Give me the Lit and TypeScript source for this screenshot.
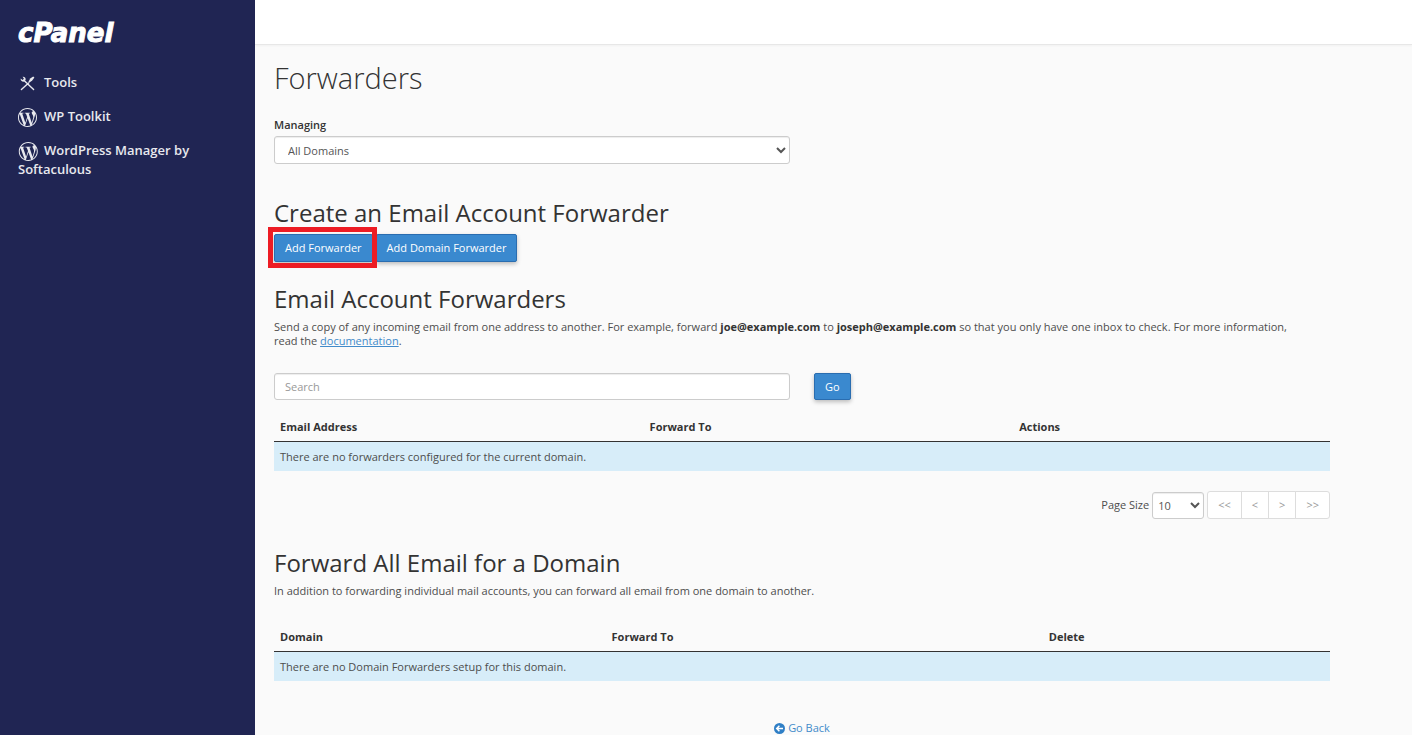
import { LitElement, html, css, svg } from "lit";
import { customElement, property } from "lit/decorators.js";

const wordpressMark = svg`<path d="M21.469 6.825c.84 1.537 1.318 3.3 1.318 5.175 0 3.979-2.156 7.456-5.363 9.325l3.295-9.527c.615-1.54.82-2.771.82-3.864 0-.405-.026-.78-.07-1.11m-7.981.105c.647-.03 1.232-.105 1.232-.105.582-.075.514-.93-.067-.899 0 0-1.755.135-2.88.135-1.064 0-2.85-.15-2.85-.15-.585-.03-.661.855-.075.885 0 0 .54.061 1.125.09l1.68 4.605-2.37 7.08L5.354 6.9c.649-.03 1.234-.1 1.234-.1.585-.075.516-.93-.065-.896 0 0-1.746.138-2.874.138-.2 0-.438-.008-.69-.015C4.911 3.15 8.235 1.215 12 1.215c2.809 0 5.365 1.072 7.286 2.833-.046-.003-.091-.009-.141-.009-1.06 0-1.812.923-1.812 1.914 0 .89.513 1.643 1.06 2.531.411.72.89 1.643.89 2.977 0 .915-.354 1.994-.821 3.479l-1.075 3.585-3.9-11.61.001.014zM12 22.784c-1.059 0-2.081-.153-3.048-.437l3.237-9.406 3.315 9.087c.024.053.05.101.078.149-1.12.393-2.325.609-3.582.609M1.211 12c0-1.564.336-3.05.935-4.39L7.29 21.709C3.694 19.96 1.212 16.271 1.211 12M12 0C5.385 0 0 5.385 0 12s5.385 12 12 12 12-5.385 12-12S18.615 0 12 0"/>`;

@customElement("side-nav")
export class SideNav extends LitElement {
  static styles = css`
    :host {
      display: block;
      background: #202553;
      padding: 17px 18px;
      box-sizing: border-box;
    }
    .logo {
      display: block;
      font: italic bold 26px/32px "DejaVu Sans", sans-serif;
      color: #fff;
      -webkit-text-stroke: 1px #fff;
      text-decoration: none;
      margin-bottom: 24px;
    }
    .list {
      list-style: none;
      margin: 0;
      padding: 0;
      display: grid;
      gap: 15px;
    }
    .item {
      display: block;
      color: #e8e9ee;
      font-size: 13px;
      font-weight: 600;
      line-height: 19px;
      text-decoration: none;
    }
    .icon {
      width: 19px;
      height: 19px;
      margin: -2px 7px -2px 0;
      vertical-align: middle;
      fill: currentColor;
    }
  `;

  render() {
    return html`
      <a class="logo" href="#">cPanel</a>
      <nav>
        <ul class="list">
          <li>
            <a class="item" href="#tools"
              ><svg class="icon" viewBox="0 0 19 19" aria-hidden="true">
                <path
                  d="M6.6 7 15.6 15.6M10.6 8.9 3.4 15.6"
                  fill="none"
                  stroke="currentColor"
                  stroke-width="1.4"
                  stroke-linecap="round"
                />
                <path
                  d="M10.4 8.1 12.2 4.6 15.2 2.4 16.4 3.6 14.2 6.6 11.2 8.8z"
                />
                <path
                  d="M4.6 2.7A2.7 2.7 0 0 1 7.6 6.1L6.2 7.5A2.7 2.7 0 0 1 2.7 4.4L4.6 6 5.9 4.8z"
                /></svg
              >Tools</a
            >
          </li>
          <li>
            <a class="item" href="#wp-toolkit"
              ><svg class="icon" viewBox="0 0 24 24" aria-hidden="true">
                ${wordpressMark}</svg
              >WP Toolkit</a
            >
          </li>
          <li>
            <a class="item" href="#wordpress-manager"
              ><svg class="icon" viewBox="-1 0 24 24" overflow="visible" aria-hidden="true">
                ${wordpressMark}</svg
              >WordPress Manager by Softaculous</a
            >
          </li>
        </ul>
      </nav>
    `;
  }
}

@customElement("empty-table")
export class EmptyTable extends LitElement {
  static styles = css`
    :host {
      display: block;
    }
    .table {
      width: 100%;
      border-collapse: collapse;
      table-layout: fixed;
    }
    .head {
      padding: 7px 6px;
      line-height: 15px;
      text-align: left;
      font-weight: 700;
      color: #333;
      border-bottom: 1px solid #333;
    }
    .cell {
      padding: 7px 6px;
      line-height: 15px;
      background: #d7edf9;
    }
  `;

  @property({ attribute: false }) columns: { label: string; width: string }[] = [];
  @property() message = "";

  render() {
    return html`
      <table class="table">
        <colgroup>
          ${this.columns.map((c) => html`<col style="width:${c.width}" />`)}
        </colgroup>
        <thead>
          <tr>
            ${this.columns.map((c) => html`<th class="head" scope="col">${c.label}</th>`)}
          </tr>
        </thead>
        <tbody>
          <tr>
            <td class="cell" colspan=${this.columns.length}>${this.message}</td>
          </tr>
        </tbody>
      </table>
    `;
  }
}

@customElement("app-root")
export class AppRoot extends LitElement {
  static styles = css`
    :host {
      display: grid;
      grid-template-columns: 255px minmax(0, 1fr);
      min-height: 100vh;
      background: #fafafa;
      color: #4d4d4d;
      font-family: "Open Sans", "Noto Sans", sans-serif;
      font-size: 11px;
      line-height: 14px;
    }
    .topbar {
      height: 44px;
      background: #fff;
      border-bottom: 1px solid #e7e7e7;
      box-shadow: 0 1px 2px rgba(0, 0, 0, 0.04);
    }
    .content {
      max-width: 1056px;
      margin: 0 19px;
    }
    h1,
    h2,
    p {
      margin: 0;
    }
    .title {
      font-size: 29px;
      line-height: 40px;
      font-weight: 300;
      color: #333;
      padding: 13px 0 20px;
    }
    .heading {
      font-size: 24px;
      line-height: 32px;
      font-weight: 400;
      color: #333;
    }
    .row {
      display: grid;
      grid-template-columns: 1fr 1fr;
      gap: 24px;
      justify-items: start;
    }
    .filter {
      margin-top: 25px;
    }
    .managing {
      width: 100%;
    }
    .label {
      display: block;
      font-weight: 600;
      color: #333;
      margin-bottom: 4px;
    }
    .field {
      box-sizing: border-box;
      height: 28px;
      border: 1px solid #ccc;
      border-radius: 3px;
      background-color: #fff;
      box-shadow: inset 0 1px 1px rgba(0, 0, 0, 0.075);
      color: #555;
      font: inherit;
      margin: 0;
    }
    .wide {
      width: 100%;
      padding: 0 0 0 9px;
    }
    .search {
      width: 100%;
      height: 27px;
      padding: 0 10px;
    }
    .search::placeholder {
      color: #999;
      opacity: 1;
    }
    .create {
      margin: 33px 0 21px;
    }
    .actions {
      display: flex;
      gap: 3px;
      margin-top: 5px;
    }
    .marked {
      position: relative;
      display: flex;
    }
    .marked::after {
      content: "";
      position: absolute;
      inset: -7px -4px -6px -6px;
      border: 5px solid #ed1c24;
      pointer-events: none;
    }
    .button {
      box-sizing: border-box;
      height: 28px;
      padding: 0 10px;
      border: 1px solid #2a6db0;
      border-radius: 2px;
      background: #3a89cf;
      color: #fff;
      font: inherit;
      font-weight: 500;
      box-shadow: 0 2px 4px rgba(0, 0, 0, 0.25);
    }
    .go {
      height: 27px;
    }
    .intro {
      margin-top: 5px;
      padding-right: 24px;
    }
    .strong {
      color: #333;
      font-weight: 700;
    }
    .link {
      color: #428bca;
    }
    .table {
      margin-top: 12px;
    }
    .domains {
      margin-top: 24px;
    }
    .pager {
      display: flex;
      justify-content: flex-end;
      align-items: center;
      gap: 3px;
      margin: 20px 0 28px;
    }
    .size {
      width: 52px;
      padding: 0 0 0 1px;
      height: 27px;
    }
    .pages {
      display: flex;
    }
    .page {
      box-sizing: border-box;
      height: 28px;
      padding: 0 10px;
      border: 1px solid #ddd;
      margin-left: -1px;
      background: #fff;
      color: #999;
      font: inherit;
    }
    .page:first-child {
      border-radius: 3px 0 0 3px;
      margin-left: 0;
    }
    .page:last-child {
      border-radius: 0 3px 3px 0;
    }
    .back {
      display: flex;
      justify-content: center;
      align-items: center;
      gap: 3px;
      width: max-content;
      margin: 40px auto 0;
      color: #428bca;
      text-decoration: none;
    }
    .back-icon {
      width: 11px;
      height: 11px;
    }
  `;

  render() {
    return html`
      <side-nav></side-nav>
      <div>
        <header class="topbar"></header>
        <main class="content">
          <h1 class="title">Forwarders</h1>

          <div class="row">
            <div class="managing">
              <label class="label" for="domain">Managing</label>
              <select id="domain" class="field wide">
                <option>All Domains</option>
              </select>
            </div>
          </div>

          <section class="create">
            <h2 class="heading">Create an Email Account Forwarder</h2>
            <div class="actions">
              <span class="marked"><button class="button" type="button">Add Forwarder</button></span>
              <button class="button" type="button">Add Domain Forwarder</button>
            </div>
          </section>

          <section>
            <h2 class="heading">Email Account Forwarders</h2>
            <p class="intro">
              Send a copy of any incoming email from one address to another. For example, forward
              <strong class="strong">joe@example.com</strong> to
              <strong class="strong">joseph@example.com</strong> so that you only have one inbox to
              check. For more information, read the <a class="link" href="#docs">documentation</a>.
            </p>
            <div class="row filter">
              <input class="field search" type="text" placeholder="Search" aria-label="Search" />
              <button class="button go" type="button">Go</button>
            </div>
            <empty-table
              class="table"
              .columns=${[
                { label: "Email Address", width: "35%" },
                { label: "Forward To", width: "35%" },
                { label: "Actions", width: "30%" },
              ]}
              message="There are no forwarders configured for the current domain."
            ></empty-table>
            <div class="pager">
              <label for="size">Page Size</label>
              <select id="size" class="field size">
                <option>10</option>
              </select>
              <div class="pages">
                <button class="page" type="button">&lt;&lt;</button>
                <button class="page" type="button">&lt;</button>
                <button class="page" type="button">&gt;</button>
                <button class="page" type="button">&gt;&gt;</button>
              </div>
            </div>
          </section>

          <section>
            <h2 class="heading">Forward All Email for a Domain</h2>
            <p class="intro">
              In addition to forwarding individual mail accounts, you can forward all email from one
              domain to another.
            </p>
            <empty-table
              class="table domains"
              .columns=${[
                { label: "Domain", width: "31.4%" },
                { label: "Forward To", width: "41.4%" },
                { label: "Delete", width: "27.2%" },
              ]}
              message="There are no Domain Forwarders setup for this domain."
            ></empty-table>
          </section>

          <a class="back" href="#back">
            <svg class="back-icon" viewBox="0 0 11 11" aria-hidden="true">
              <circle cx="5.5" cy="5.5" r="5.5" fill="#2f7fc6" />
              <path
                d="M9 5.5H3M5.4 2.8 2.7 5.5 5.4 8.2"
                fill="none"
                stroke="#fff"
                stroke-width="1.5"
              />
            </svg>
            Go Back
          </a>
        </main>
      </div>
    `;
  }
}
